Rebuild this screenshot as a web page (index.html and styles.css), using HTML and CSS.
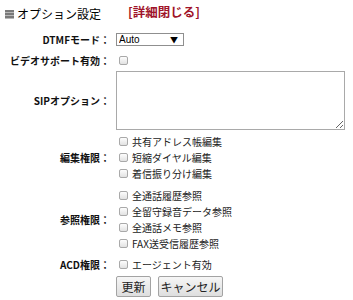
FILE: index.html
```html
<!DOCTYPE html>
<html>
<head>
<meta charset="utf-8">
<link rel="stylesheet" href="styles.css">
</head>
<body>
    <div class="panel">
        <div class="head">
            <span class="icon"></span>
            <span class="title">オプション設定</span>
            <a class="toggle" href="#">[詳細閉じる]</a>
        </div>

        <div class="row row-dtmf">
            <div class="label">DTMFモード：</div>
            <div class="value">
                <span class="select">
                    <select>
                        <option>Auto</option>
                    </select>
                    <span class="arrow">▼</span>
                </span>
            </div>
        </div>

        <div class="row row-video">
            <div class="label">ビデオサポート有効：</div>
            <div class="value">
                <input type="checkbox" class="check">
            </div>
        </div>

        <div class="row row-sip">
            <div class="label">SIPオプション：</div>
            <div class="value">
                <textarea class="area"></textarea>
            </div>
        </div>

        <div class="row row-checks">
            <div class="label">編集権限：</div>
            <div class="value">
                <label class="item"><input type="checkbox" class="check">共有アドレス帳編集</label>
                <label class="item"><input type="checkbox" class="check">短縮ダイヤル編集</label>
                <label class="item"><input type="checkbox" class="check">着信振り分け編集</label>
            </div>
        </div>

        <div class="row row-checks">
            <div class="label">参照権限：</div>
            <div class="value">
                <label class="item"><input type="checkbox" class="check">全通話履歴参照</label>
                <label class="item"><input type="checkbox" class="check">全留守録音データ参照</label>
                <label class="item"><input type="checkbox" class="check">全通話メモ参照</label>
                <label class="item"><input type="checkbox" class="check">FAX送受信履歴参照</label>
            </div>
        </div>

        <div class="row row-acd">
            <div class="label">ACD権限：</div>
            <div class="value">
                <label class="item"><input type="checkbox" class="check">エージェント有効</label>
            </div>
        </div>

        <div class="buttons">
            <button class="btn btn-update">更新</button>
            <button class="btn btn-cancel">キャンセル</button>
        </div>
    </div>
</body>
</html>
```

FILE: styles.css
```css
body {
    margin: 0;
    background: #fff;
    color: #222;
    font-family: "Noto Sans CJK JP", "DejaVu Sans", sans-serif;
    font-size: 10px;
}
.panel {
    width: 353px;
}
.head {
    display: flex;
    align-items: center;
    height: 26px;
    padding-bottom: 3px;
    padding-left: 5px;
}
.icon {
    width: 9px;
    height: 9px;
    margin-top: 2px;
    background: repeating-linear-gradient(#7a7a7a 0 2px, #b8b8b8 2px 3px);
}
.title {
    width: 111px;
    margin-left: 3px;
    font-size: 12px;
    color: #000;
}
.toggle {
    color: #a0142a;
    font-size: 12.5px;
    font-weight: bold;
    text-decoration: none;
    margin-top: -4px;
}
.row {
    display: flex;
    align-items: center;
}
.label {
    width: 110px;
    text-align: right;
    font-weight: bold;
    color: #111;
}
.value {
    margin-left: 6px;
}
.row-dtmf {
    height: 21px;
}
.row-video {
    height: 20px;
}
.row-sip {
    height: 60px;
}
.row-checks {
    padding: 3px 0;
}
.row-acd {
    height: 20px;
}
.select {
    position: relative;
    display: block;
}
.select select {
    display: block;
    appearance: none;
    width: 68px;
    height: 13px;
    margin: 0;
    padding: 0 0 0 2px;
    border: 1px solid #8f8f8f;
    border-radius: 0;
    background: #fff;
    color: #000;
    font-family: "Liberation Sans", Arial, sans-serif;
    font-size: 10px;
    line-height: 11px;
}
.arrow {
    position: absolute;
    right: 6px;
    top: 1px;
    font-size: 8px;
    line-height: 11px;
    color: #000;
}
.check {
    appearance: none;
    box-sizing: border-box;
    width: 9px;
    height: 9px;
    margin: 0 4px 0 3px;
    border: 1px solid #a9a9a9;
    border-radius: 2px;
    background: linear-gradient(#fdfdfd, #e2e2e2);
    vertical-align: middle;
}
.row-video .check {
    display: block;
}
.area {
    display: block;
    box-sizing: border-box;
    width: 229px;
    height: 59px;
    margin: 0;
    border: 1px solid #a9a9a9;
    padding: 2px;
}
.item {
    display: flex;
    align-items: center;
    height: 16px;
    color: #222;
}
.buttons {
    display: flex;
    gap: 7px;
    padding: 2px 0 0 116px;
}
.btn {
    box-sizing: border-box;
    height: 21px;
    padding: 0;
    border: 1px solid #a3a3a3;
    border-radius: 2px;
    background: linear-gradient(#f6f6f6, #dedede);
    color: #222;
    font-family: "Noto Sans CJK JP", sans-serif;
    font-size: 12px;
}
.btn-update {
    width: 35px;
}
.btn-cancel {
    width: 65px;
}
```
